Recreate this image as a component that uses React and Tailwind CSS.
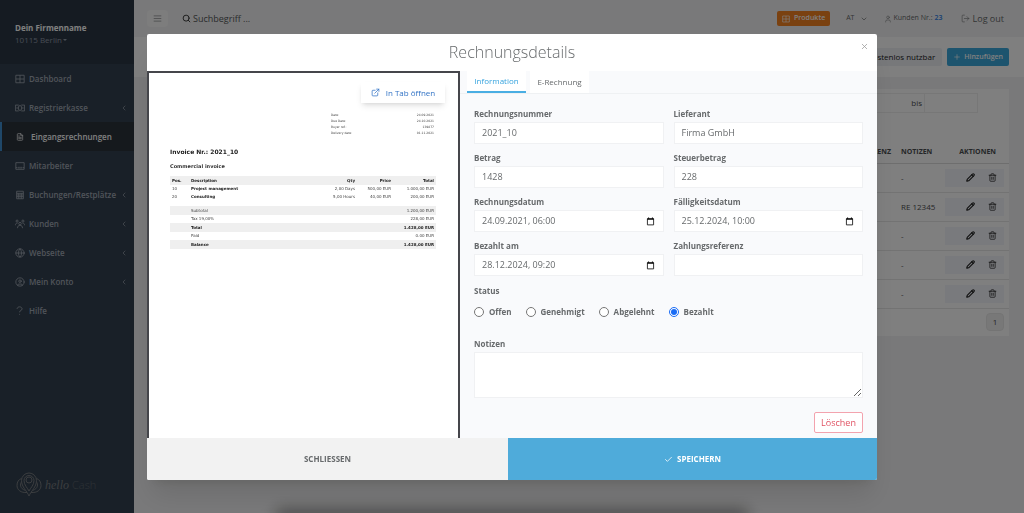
import React, { useState } from 'react';
import {
    AlignJustify, Check, ChevronDown, ChevronLeft, CircleUser, ExternalLink, FileText, Globe,
    LogOut, Pencil, Plus, Search, Trash2, User, X,
} from 'lucide-react';

const NAV = [
    { label: "Dashboard", icon: GridIcon },
    { label: "Registrierkasse", icon: CashIcon, sub: true },
    { label: "Eingangsrechnungen", icon: FileText, active: true },
    { label: "Mitarbeiter", icon: StaffIcon },
    { label: "Buchungen/Restplätze", icon: BookingIcon, sub: true },
    { label: "Kunden", icon: PeopleIcon, sub: true },
    { label: "Webseite", icon: Globe, sub: true },
    { label: "Mein Konto", icon: CircleUser, sub: true },
    { label: "Hilfe", icon: QuestionIcon },
];

const NOTES = ["-", "RE 12345", "-", "-", "-"];

const META = [
    ["Date:", "24.09.2021"],
    ["Due Date:", "24.10.2021"],
    ["Buyer ref.:", "139877"],
    ["Delivery date:", "01.11.2021"],
];

const POSITIONS = [
    ["10", "Project management", "2,00 Days", "500,00 EUR", "1.000,00 EUR"],
    ["20", "Consulting", "5,00 Hours", "40,00 EUR", "200,00 EUR"],
];

const SUMS = [
    { label: "Subtotal", value: "1.200,00 EUR", band: true },
    { label: "Tax 19,00%", value: "228,00 EUR" },
    { label: "Total", value: "1.428,00 EUR", band: true, bold: true },
    { label: "Paid", value: "0.00 EUR" },
    { label: "Balance", value: "1.428,00 EUR", band: true, bold: true },
];

const STATUS = ["Offen", "Genehmigt", "Abgelehnt", "Bezahlt"];

function Svg({ className, children }) {
    return (
        <svg viewBox="0 0 24 24" fill="none" stroke="currentColor" strokeWidth="2" className={className} aria-hidden="true">
            {children}
        </svg>
    );
}

function GridIcon({ className }) {
    return <Svg className={className}><path d="M2 3h20v18H2zM12 3v18M2 12h20" /></Svg>;
}

function CashIcon({ className }) {
    return (
        <Svg className={className}>
            <path d="M9 5H1v14h8M15 5h8v14h-8" />
            <ellipse cx="12" cy="12" rx="4" ry="6" />
            <path d="M5 10v4M19 10v4" />
        </Svg>
    );
}

function StaffIcon({ className }) {
    return <Svg className={className}><path d="M2 4h20v16H2zM2 16h4M9 14v4M12 14v4M15 14v4M18 16h4" /></Svg>;
}

function BookingIcon({ className }) {
    return <Svg className={className}><path d="M4 3h16v18H4zM4 8h16M4 12h16M4 16h16M9 8v13M15 8v13" /></Svg>;
}

function PeopleIcon({ className }) {
    return (
        <Svg className={className}>
            <circle cx="12" cy="11" r="3" />
            <circle cx="5" cy="5" r="2.500" />
            <circle cx="19" cy="5" r="2.500" />
            <path d="M6 22c0-4 2-7 6-7s6 3 6 7M1 15c0-3 1-5 5-5M23 15c0-3-1-5-5-5" />
        </Svg>
    );
}

function QuestionIcon({ className }) {
    return <Svg className={className}><path d="M5 7c0-3 3-5 6-5s6 2 6 5c0 4-6 3-6 8M11 19v2" /></Svg>;
}

function CalendarIcon() {
    return (
        <svg viewBox="0 0 16 16" className="size-[9px]" aria-hidden="true">
            <path d="M2.500 3h11v11h-11z" fill="none" stroke="#111" strokeWidth="1.500" />
            <path d="M2 2.500h12V5H2zM3.500 1h2v2h-2zM10.500 1h2v2h-2z" fill="#111" />
        </svg>
    );
}

function Logo() {
    return (
        <a href="#" aria-label="hello Cash" className="mt-auto mb-4 ml-4 flex items-center gap-[3px] text-[#777b80]">
            <svg viewBox="0 0 52 50" fill="none" stroke="currentColor" strokeWidth="2" className="h-[25px] w-[26px]">
                <path d="M26 48C22 38 11 30 11 17a15 15 0 0 1 30 0c0 13-11 21-15 31z" />
                <path d="M26 38c-3-6-10-12-10-21a10 10 0 0 1 20 0c0 9-7 15-10 21z" />
                <circle cx="26" cy="16" r="6" />
                <path d="M11 13C5 15 2 20 2 27c0 9 8 15 20 14M41 13c6 2 9 7 9 14 0 9-8 15-20 14" />
                <path d="M11 20c-3 4-4 13 8 17M41 20c3 4 4 13-8 17" />
            </svg>
            <span className="font-['Liberation_Serif',serif] text-[12px] leading-4 italic">hello</span>
            <span className="text-[11px] leading-4 font-light opacity-60">Cash</span>
        </a>
    );
}

function Sidebar() {
    return (
        <aside className="flex w-[134px] shrink-0 flex-col bg-[#334150] text-[#a0a8b4]">
            <div className="h-16 bg-[#2b3745] pt-[21px] pl-[15px]">
                <div className="text-[8px] leading-[14px] font-bold text-white">Dein Firmenname</div>
                <button className="flex items-center gap-px text-[8px] leading-[10px] text-[#8f9aa8]">
                    10115 Berlin
                    <svg viewBox="0 0 8 4" className="h-[2px] w-1" fill="currentColor"><path d="M0 0h8L4 4z" /></svg>
                </button>
            </div>
            <nav>
                {NAV.map(({ label, icon: Icon, sub, active }) => (
                    <a
                        key={label}
                        href="#"
                        className={
                            active
                                ? "flex h-[29px] items-center gap-[7px] border-l-2 border-[#3f8fd0] bg-[#2a323b] pr-2 pl-[14px] text-[8px] font-semibold text-white"
                                : "flex h-[29px] items-center gap-1 pr-[6px] pl-[15px] text-[8px] font-semibold"
                        }
                    >
                        <Icon className={active ? "size-2 shrink-0" : "size-[10px] shrink-0"} />
                        <span>{label}</span>
                        {sub && <ChevronLeft className="ml-auto size-2 shrink-0" strokeWidth={2} />}
                    </a>
                ))}
            </nav>
            <Logo />
        </aside>
    );
}

function Topbar() {
    return (
        <header className="flex h-[37px] items-center px-[13px] text-[#676a6c]">
            <button aria-label="Menü" className="flex h-[17px] w-[21px] items-center justify-center rounded-sm bg-[#fafafa]">
                <AlignJustify className="size-[9px]" strokeWidth={1.500} />
            </button>
            <label className="ml-[14px] flex flex-1 items-center gap-[2px]">
                <Search className="size-[9px] text-[#333]" strokeWidth={2.500} />
                <input
                    aria-label="Suche"
                    placeholder="Suchbegriff ..."
                    className="w-40 text-[9px] leading-4 outline-none placeholder:text-[#55585a]"
                />
            </label>
            <button className="flex h-[15px] items-center gap-1 rounded-xs bg-[#f58220] px-[5px] text-[7px] font-semibold text-white">
                <GridIcon className="size-2" />
                Produkte
            </button>
            <button className="ml-4 flex items-center gap-[6px] text-[7px]">
                AT
                <ChevronDown className="size-2" />
            </button>
            <span className="ml-4 flex items-center gap-px text-[7px]">
                <User className="size-2" strokeWidth={1.500} />
                Kunden Nr.:
                <a href="#" className="ml-px font-semibold text-[#2f7fe6]">23</a>
            </span>
            <a href="#" className="mr-[7px] ml-[18px] flex items-center gap-[3px] text-[9px]">
                <LogOut className="size-[9px]" strokeWidth={1.500} />
                Log out
            </a>
        </header>
    );
}

function InvoiceList() {
    return (
        <section className="mx-[15px] mt-3 bg-white pb-[5px] text-[8px] text-[#4b4e50]">
            <div className="flex h-[53px] justify-end pt-1 pr-[31px]">
                <div className="flex h-5 border border-[#eee]">
                    <input aria-label="Datum von" className="w-24 outline-none" />
                    <span className="w-[21px] pt-[3px] pr-[2px] text-right leading-3">bis</span>
                    <input aria-label="Datum bis" className="w-[53px] border-l border-[#eee] outline-none" />
                </div>
            </div>
            <table className="w-full table-fixed border-collapse">
                <colgroup>
                    <col />
                    <col className="w-[43px]" />
                    <col className="w-[67px]" />
                </colgroup>
                <thead>
                    <tr className="h-[21px] border-b border-[#ddd] text-[7px] font-bold">
                        <th className="pr-2 text-right">ZAHLUNGSREFERENZ</th>
                        <th className="pl-[2px] text-left">NOTIZEN</th>
                        <th className="pr-[13px] text-right">AKTIONEN</th>
                    </tr>
                </thead>
                <tbody>
                    {NOTES.map((note, i) => (
                        <tr key={i} className="h-[29px] border-b border-[#e7e7e7]">
                            <td />
                            <td className="pl-[2px] whitespace-nowrap">{note}</td>
                            <td>
                                <div className="mr-[5px] ml-[3px] flex h-[18px] items-center justify-end gap-px bg-[#f2f4fa] text-[#222]">
                                    <button aria-label="Bearbeiten" className="flex h-[18px] w-[18px] items-center justify-center">
                                        <Pencil className="size-[9px]" strokeWidth={3} />
                                    </button>
                                    <button aria-label="Löschen" className="flex h-[18px] w-6 items-center justify-center">
                                        <Trash2 className="size-[9px]" />
                                    </button>
                                </div>
                            </td>
                        </tr>
                    ))}
                </tbody>
            </table>
            <div className="flex justify-end pt-1 pr-[5px]">
                <button className="h-[18px] w-[18px] rounded-sm border border-[#e9e9e9] bg-[#f0f0f0]">1</button>
            </div>
        </section>
    );
}

function Invoice() {
    return (
        <div className="relative overflow-hidden border-2 border-b-0 border-[#45464b] bg-white font-['DejaVu_Sans',sans-serif] text-[4px] text-[#444]">
            <a
                href="#"
                className="absolute top-[9px] right-[13px] flex h-[21px] w-[84px] items-center justify-center gap-[6px] bg-white font-['Open_Sans',sans-serif] text-[8px] font-medium text-[#3273c5] shadow-md"
            >
                <ExternalLink className="size-[9px]" />
                In Tab öffnen
            </a>
            <div className="pt-[39px] pr-[22px] pl-[21px]">
                <dl className="ml-auto w-[105px] pr-[2px] text-[3px] leading-[6px]">
                    {META.map(([k, v]) => (
                        <div key={k} className="flex justify-between">
                            <dt>{k}</dt>
                            <dd>{v}</dd>
                        </div>
                    ))}
                </dl>
                <h2 className="mt-2 text-[6px] leading-4 font-bold text-[#222]">Invoice Nr.: 2021_10</h2>
                <h3 className="mt-px text-[5px] leading-[10px] font-bold text-[#333]">Commercial invoice</h3>
                <table className="mt-[5px] w-full table-fixed border-collapse leading-[8px]">
                    <colgroup>
                        <col className="w-[19px]" />
                        <col />
                        <col className="w-10" />
                        <col className="w-9" />
                        <col className="w-[43px]" />
                    </colgroup>
                    <thead>
                        <tr className="h-[9px] bg-[#efefef] text-[#222]">
                            <th className="pl-[2px] text-left">Pos.</th>
                            <th className="pl-[2px] text-left">Description</th>
                            <th className="pr-[2px] text-right">Qty</th>
                            <th className="pr-[2px] text-right">Price</th>
                            <th className="pr-[2px] text-right">Total</th>
                        </tr>
                    </thead>
                    <tbody>
                        {POSITIONS.map(([pos, name, qty, price, total]) => (
                            <tr key={pos} className="h-2">
                                <td className="pl-[2px]">{pos}</td>
                                <td className="pl-[2px] font-bold text-[#222]">{name}</td>
                                <td className="pr-[2px] text-right">{qty}</td>
                                <td className="pr-[2px] text-right">{price}</td>
                                <td className="pr-[2px] text-right">{total}</td>
                            </tr>
                        ))}
                        <tr className="h-[5px]"><td colSpan={5} /></tr>
                        {SUMS.map((s) => (
                            <tr
                                key={s.label}
                                className={(s.band ? "h-[9px] bg-[#efefef]" : "h-2") + (s.bold ? " font-bold text-[#222]" : "")}
                            >
                                <td />
                                <td className="pl-[2px]">{s.label}</td>
                                <td colSpan={3} className="pr-[2px] text-right">{s.value}</td>
                            </tr>
                        ))}
                    </tbody>
                </table>
            </div>
        </div>
    );
}

function Field({ id, label, value, date }) {
    return (
        <div>
            <label htmlFor={id} className="block text-[8px] leading-4 font-bold">{label}</label>
            <div className="flex h-[22px] items-center border border-[#f0f1f3] bg-white pr-2 pl-[7px]">
                <input id={id} defaultValue={value} className="min-w-0 flex-1 text-[9px] leading-4 outline-none" />
                {date && <button type="button" aria-label="Kalender öffnen"><CalendarIcon /></button>}
            </div>
        </div>
    );
}

function InvoiceForm() {
    const [status, setStatus] = useState("Bezahlt");

    return (
        <div className="bg-[#f9fafc]">
            <div className="flex h-[23px] gap-1 border-b border-[#eff1f3] pl-[7px] text-[8px]">
                <button className="w-[59px] border-b-2 border-[#4aaee3] bg-white text-[#35a3de]">Information</button>
                <button className="w-[59px] bg-white">E-Rechnung</button>
            </div>
            <form className="pt-3 pr-[14px] pl-[14px]">
                <div className="grid grid-cols-2 gap-x-[10px] gap-y-[6px]">
                    <Field id="nr" label="Rechnungsnummer" value="2021_10" />
                    <Field id="lieferant" label="Lieferant" value="Firma GmbH" />
                    <Field id="betrag" label="Betrag" value="1428" />
                    <Field id="steuer" label="Steuerbetrag" value="228" />
                    <Field id="datum" label="Rechnungsdatum" value="24.09.2021, 06:00" date />
                    <Field id="faellig" label="Fälligkeitsdatum" value="25.12.2024, 10:00" date />
                    <Field id="bezahlt" label="Bezahlt am" value="28.12.2024, 09:20" date />
                    <Field id="referenz" label="Zahlungsreferenz" value="" />
                </div>
                <fieldset className="mt-[7px]">
                    <legend className="text-[8px] leading-4 font-bold">Status</legend>
                    <div className="mt-[5px] flex gap-[14px]">
                        {STATUS.map((s) => (
                            <label key={s} className="flex items-center gap-[5px] text-[8px] leading-4 font-bold">
                                <input
                                    type="radio"
                                    name="status"
                                    checked={status === s}
                                    onChange={() => setStatus(s)}
                                    className="size-[10px] accent-[#1a6cf5]"
                                />
                                {s}
                            </label>
                        ))}
                    </div>
                </fieldset>
                <label htmlFor="notizen" className="mt-4 block text-[8px] leading-4 font-bold">Notizen</label>
                <textarea id="notizen" className="block h-[46px] w-full resize-y border border-[#f0f1f3] bg-white text-[9px] outline-none" />
                <div className="mt-[14px] mb-[5px] flex justify-end">
                    <button type="button" className="h-[21px] w-[49px] rounded-xs border border-[#f3a3ae] bg-white text-[9px] text-[#e05263]">
                        Löschen
                    </button>
                </div>
            </form>
        </div>
    );
}

function InvoiceModal() {
    return (
        <div className="fixed inset-0 overflow-hidden bg-black/50 pt-[34px]">
            <div className="absolute -bottom-3 left-[27%] h-4 w-[46%] bg-black/40 blur-sm" />
            <div
                role="dialog"
                aria-labelledby="modal-title"
                className="relative mx-auto max-w-[730px] overflow-hidden rounded-xs bg-white shadow-xl"
            >
                <div className="relative">
                    <h1 id="modal-title" className="text-center text-[16px] leading-[37px] font-light">Rechnungsdetails</h1>
                    <button aria-label="Schließen" className="absolute top-2 right-2 text-[#999]">
                        <X className="size-[9px]" />
                    </button>
                </div>
                <div className="grid grid-cols-[313px_1fr]">
                    <Invoice />
                    <InvoiceForm />
                </div>
                <div className="grid h-[42px] grid-cols-[361fr_369fr] text-[8px] font-bold">
                    <button className="bg-[#f2f2f2]">SCHLIESSEN</button>
                    <button className="flex items-center justify-center gap-1 bg-[#4fabda] text-white">
                        <Check className="size-[9px]" />
                        SPEICHERN
                    </button>
                </div>
            </div>
        </div>
    );
}

export default function App() {
    return (
        <div className="flex min-h-screen bg-[#f3f3f4] font-['Open_Sans',sans-serif] text-[#676a6c]">
            <Sidebar />
            <main className="flex-1">
                <Topbar />
                <div className="flex h-10 items-center justify-end gap-[5px] bg-white pr-[15px] text-[8px]">
                    <span className="rounded-xs bg-[#eef0f5] px-[7px] leading-[18px] text-[#222]">
                        Kostenlos nutzbar
                    </span>
                    <button className="flex h-[18px] items-center gap-[3px] rounded-xs bg-[#3aa8dc] px-[6px] text-[7px] font-semibold text-white">
                        <Plus className="size-2" />
                        Hinzufügen
                    </button>
                </div>
                <InvoiceList />
            </main>
            <InvoiceModal />
        </div>
    );
}
